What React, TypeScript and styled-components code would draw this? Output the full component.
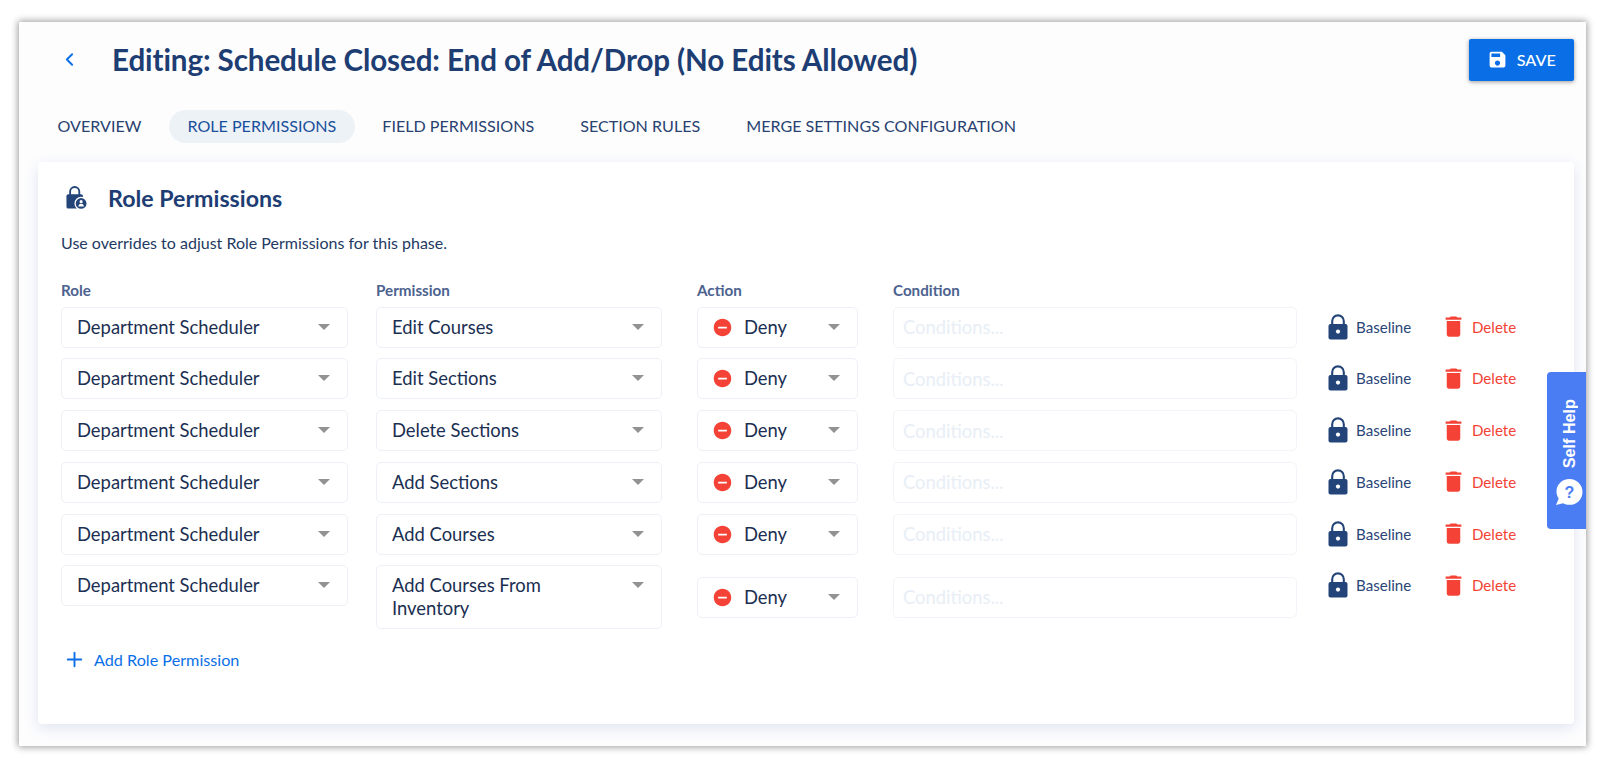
import React, { FC } from 'react';
import styled, { createGlobalStyle, css } from 'styled-components';
import { ChevronLeft, Plus } from 'lucide-react';
import { MdDelete, MdRemoveCircle, MdSave } from 'react-icons/md';

const GlobalStyle = createGlobalStyle`
    html, body {
        margin: 0;
        padding: 0;
        background: #fff;
    }
    * {
        box-sizing: border-box;
    }
    body {
        font-family: Lato, "Open Sans", sans-serif;
        color: #1f3358;
    }
`;

const Page = styled.div`
    width: 1600px;
    height: 765px;
    padding: 21.5px 14px 0 18.5px;
    overflow: hidden;
`;

const Panel = styled.div`
    position: relative;
    height: 724px;
    padding: 17px 12px 0 19.5px;
    background: #fdfdfe;
    box-shadow: 0 0 7px 1px rgba(0, 0, 0, 0.4);
`;

const Header = styled.header`
    display: flex;
    align-items: center;
    height: 42px;
`;

const BackButton = styled.button`
    display: flex;
    width: 24px;
    margin-left: 21px;
    padding: 0;
    border: 0;
    background: none;
    color: #0b6fe8;
`;

const Title = styled.h1`
    flex: 1;
    margin: 0 0 0 29px;
    font-size: 29.6px;
    font-weight: 700;
    letter-spacing: -0.1px;
    color: #1d3d73;
`;

const SaveButton = styled.button`
    display: flex;
    align-items: center;
    justify-content: center;
    gap: 9px;
    width: 105.5px;
    height: 42px;
    border: 0;
    border-radius: 2px;
    background: #0a6fe6;
    box-shadow: 0 1px 4px rgba(0, 0, 0, 0.4);
    color: #fff;
    font: 500 16.2px Lato, sans-serif;
`;

const Tabs = styled.nav`
    display: flex;
    gap: 9px;
    margin: 29px 0 0 1px;
`;

const Tab = styled.div<{ $active?: boolean }>`
    height: 33px;
    padding: 0 18.5px;
    border-radius: 17px;
    font-size: 16.1px;
    line-height: 32px;
    white-space: nowrap;
    color: #29426f;
    ${(p) =>
        p.$active &&
        css`
            background: #edf2f7;
            color: #1a4f9c;
        `}
`;

const Card = styled.section`
    height: 562.5px;
    margin-top: 19px;
    padding: 23px 0 0 23px;
    border-radius: 4px;
    background: #fff;
    box-shadow: 0 4px 14px rgba(70, 100, 170, 0.16);
`;

const CardHeading = styled.div`
    display: flex;
    align-items: center;
    gap: 20px;
    height: 26px;
    margin-left: 5px;
`;

const CardTitle = styled.h2`
    margin: 0;
    font-size: 23.2px;
    font-weight: 700;
    color: #1d3d73;
`;

const Description = styled.p`
    margin: 22px 0 0;
    font-size: 16px;
    line-height: 20px;
    color: #233a63;
`;

const Labels = styled.div`
    display: grid;
    grid-template-columns: 315px 321px 196px 435px auto;
    margin-top: 28px;
    height: 19px;
`;

const Label = styled.div`
    font-size: 15.2px;
    font-weight: 700;
    line-height: 19px;
    color: #4c628f;
`;

const Rows = styled.div`
    display: flex;
    flex-direction: column;
    gap: 10.75px;
    margin-top: 7px;
`;

const Row = styled.div`
    display: grid;
    grid-template-columns: 315px 321px 196px 435px auto;
    align-items: center;
`;

const Select = styled.div<{ $width: number; $top?: boolean }>`
    position: relative;
    display: flex;
    align-items: center;
    gap: 11px;
    width: ${(p) => p.$width}px;
    min-height: 41px;
    padding: 8px 50px 8px 15px;
    border: 1px solid #edf1f7;
    border-radius: 5px;
    background: #fff;
    font-size: 18.4px;
    line-height: 23px;
    color: #1b2f52;
    ${(p) =>
        p.$top &&
        css`
            align-self: start;
        `}
`;

const Caret = styled.span`
    position: absolute;
    top: 16px;
    right: 17px;
    width: 0;
    height: 0;
    border-left: 6px solid transparent;
    border-right: 6px solid transparent;
    border-top: 6.5px solid #929292;
`;

const DenyIcon = styled(MdRemoveCircle)`
    flex: none;
    margin-left: -1px;
    color: #f44336;
`;

const ConditionInput = styled.input`
    width: 404px;
    height: 41px;
    padding: 0 9px;
    border: 1px solid #f1f4f9;
    border-radius: 5px;
    background: #fff;
    font: 18.4px Lato, sans-serif;

    &::placeholder {
        color: #e8eef6;
        opacity: 1;
    }
`;

const RowActions = styled.div`
    display: flex;
    align-items: center;
    align-self: start;
    height: 40px;
`;

const RowAction = styled.button<{ $danger?: boolean; $width: number }>`
    display: flex;
    align-items: center;
    gap: ${(p) => (p.$danger ? 9 : 8)}px;
    width: ${(p) => p.$width}px;
    padding: 0;
    border: 0;
    background: none;
    font: 15.1px Lato, sans-serif;
    color: ${(p) => (p.$danger ? '#f44336' : '#2a4678')};
`;

const TrashIcon = styled(MdDelete)`
    margin: 0 -4px;
`;

const AddRow = styled.button`
    display: flex;
    align-items: center;
    gap: 8px;
    margin-top: 19px;
    margin-left: 2px;
    padding: 0;
    border: 0;
    background: none;
    font: 16.2px Lato, sans-serif;
    color: #0b6fe8;
`;

const SelfHelp = styled.div`
    position: absolute;
    top: 350.5px;
    right: 0;
    display: flex;
    flex-direction: column-reverse;
    align-items: center;
    justify-content: flex-start;
    gap: 10px;
    width: 39.5px;
    height: 157px;
    padding: 0 0 23px 6px;
    border-radius: 4px 0 0 4px;
    background: #4a7df4;
`;

const SelfHelpLabel = styled.span`
    writing-mode: vertical-rl;
    transform: rotate(180deg);
    font: 700 16.2px "Liberation Sans", Arial, sans-serif;
    color: #fff;
`;

const SvgHelpMark = styled.text`
    font: 700 16px "Liberation Sans", Arial, sans-serif;
    fill: #4a7df4;
`;

const LockIcon: FC = () => (
    <svg width="20" height="26" viewBox="0 0 20 26">
        <path
            d="M4.2 11V7.2a5.8 5.8 0 0 1 11.6 0V11"
            fill="none"
            stroke="#234479"
            strokeWidth="2.1"
        />
        <rect x="0.5" y="10" width="19" height="15.5" rx="2" fill="#234479" />
        <circle cx="10" cy="17.6" r="2.1" fill="#fff" />
    </svg>
);

const RoleLockIcon: FC = () => (
    <svg width="22" height="25" viewBox="0 0 24 27">
        <path
            d="M4.5 11V7a5 5 0 0 1 10 0v4"
            fill="none"
            stroke="#234479"
            strokeWidth="2"
        />
        <rect x="0.5" y="10" width="18" height="15.5" rx="2" fill="#234479" />
        <circle cx="16.5" cy="20" r="6.6" fill="#234479" stroke="#fff" strokeWidth="1.4" />
        <circle cx="16.5" cy="18" r="1.7" fill="#fff" />
        <path d="M13.4 23.2c.4-2 1.6-2.8 3.1-2.8s2.7.8 3.1 2.8z" fill="#fff" />
    </svg>
);

const HelpBubble: FC = () => (
    <svg width="28" height="28" viewBox="0 0 28 28">
        <path
            d="M14.5 1C7 1 1.5 6.5 1.5 13.5c0 2.7.8 5.1 2.2 7.1L1 27l7.2-1.7c1.9 1 4 1.5 6.3 1.5 7.3 0 13-5.7 13-12.9S21.8 1 14.5 1z"
            fill="#fff"
        />
        <SvgHelpMark x="14.5" y="19.5" textAnchor="middle">
            ?
        </SvgHelpMark>
    </svg>
);

interface Rule {
    permission: string;
}

const rules: Rule[] = [
    { permission: 'Edit Courses' },
    { permission: 'Edit Sections' },
    { permission: 'Delete Sections' },
    { permission: 'Add Sections' },
    { permission: 'Add Courses' },
    { permission: 'Add Courses From Inventory' },
];

const App: FC = () => (
    <Page>
        <GlobalStyle />
        <Panel>
            <Header>
                <BackButton>
                    <ChevronLeft size={21} strokeWidth={2.2} />
                </BackButton>
                <Title>Editing: Schedule Closed: End of Add/Drop (No Edits Allowed)</Title>
                <SaveButton>
                    <MdSave size={21} />
                    SAVE
                </SaveButton>
            </Header>
            <Tabs>
                <Tab>OVERVIEW</Tab>
                <Tab $active>ROLE PERMISSIONS</Tab>
                <Tab>FIELD PERMISSIONS</Tab>
                <Tab>SECTION RULES</Tab>
                <Tab>MERGE SETTINGS CONFIGURATION</Tab>
            </Tabs>
            <Card>
                <CardHeading>
                    <RoleLockIcon />
                    <CardTitle>Role Permissions</CardTitle>
                </CardHeading>
                <Description>Use overrides to adjust Role Permissions for this phase.</Description>
                <Labels>
                    <Label>Role</Label>
                    <Label>Permission</Label>
                    <Label>Action</Label>
                    <Label>Condition</Label>
                </Labels>
                <Rows>
                    {rules.map((rule, index) => (
                        <Row key={index}>
                            <Select $width={287} $top>
                                Department Scheduler
                                <Caret />
                            </Select>
                            <Select $width={286}>
                                {rule.permission}
                                <Caret />
                            </Select>
                            <Select $width={161}>
                                <DenyIcon size={21} />
                                Deny
                                <Caret />
                            </Select>
                            <ConditionInput placeholder="Conditions..." readOnly />
                            <RowActions>
                                <RowAction $width={116}>
                                    <LockIcon />
                                    Baseline
                                </RowAction>
                                <RowAction $danger $width={90}>
                                    <TrashIcon size={27} />
                                    Delete
                                </RowAction>
                            </RowActions>
                        </Row>
                    ))}
                </Rows>
                <AddRow>
                    <Plus size={23} strokeWidth={2} />
                    Add Role Permission
                </AddRow>
            </Card>
            <SelfHelp>
                <HelpBubble />
                <SelfHelpLabel>Self Help</SelfHelpLabel>
            </SelfHelp>
        </Panel>
    </Page>
);

export default App;
